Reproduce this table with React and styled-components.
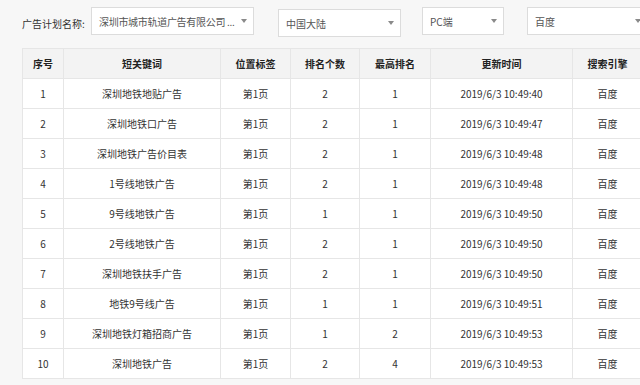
import React from "react";
import styled, { createGlobalStyle } from "styled-components";

const Global = createGlobalStyle`
  html, body { margin: 0; padding: 0; overflow: hidden; background: #f7f7f7; }
  body { font-family: "Noto Sans CJK SC", "Noto Sans", sans-serif; color: #333; }
`;

const Page = styled.div`
  width: 640px;
  height: 385px;
  overflow: hidden;
  padding: 7px 0 0 22px;
  box-sizing: border-box;
`;

const FilterBar = styled.div`
  display: flex;
  align-items: flex-start;
  width: 640px;
  height: 41px;
`;

const Label = styled.div`
  font-size: 10px;
  line-height: 14px;
  margin-top: 10px;
  width: 69px;
  flex: none;
  color: #333;
  white-space: nowrap;
`;

const Select = styled.div`
  flex: none;
  box-sizing: border-box;
  width: ${(p) => p.$w}px;
  height: 28px;
  margin-left: ${(p) => p.$gap || 0}px;
  margin-top: ${(p) => p.$top || 0}px;
  background: #fff;
  border: 1px solid #dcdcdc;
  display: flex;
  align-items: center;
  padding: 0 6px 0 7px;
  font-size: 10px;
  color: #555;
`;

const SelectText = styled.span`
  flex: 1;
  white-space: nowrap;
  line-height: 14px;
  margin-top: 1px;
  letter-spacing: ${(p) => p.$tight ? "-0.3px" : "0"};
`;

const Caret = styled.span`
  flex: none;
  width: 0;
  height: 0;
  border-left: 3.5px solid transparent;
  border-right: 3.5px solid transparent;
  border-top: 4px solid #8a8a8a;
  margin-left: 1px;
`;

const Table = styled.table`
  border-collapse: collapse;
  table-layout: fixed;
  width: 620px;
  background: #fff;
  font-size: 10px;
`;

const HeadCell = styled.th`
  height: 29px;
  padding: 0;
  background: #f3f3f3;
  border: 1px solid #e6e6e6;
  font-weight: bold;
  color: #222;
  text-align: center;
  line-height: 14px;
`;

const Cell = styled.td`
  height: 29px;
  padding: 0;
  border: 1px solid #e6e6e6;
  text-align: center;
  color: #333;
  line-height: 14px;
  white-space: nowrap;
`;

const cols = [41, 157, 70, 69, 71, 142, 70];
const headers = ["序号", "短关键词", "位置标签", "排名个数", "最高排名", "更新时间", "搜索引擎"];

const rows = [
  [1, "深圳地铁地贴广告", "第1页", 2, 1, "2019/6/3 10:49:40", "百度"],
  [2, "深圳地铁口广告", "第1页", 2, 1, "2019/6/3 10:49:47", "百度"],
  [3, "深圳地铁广告价目表", "第1页", 2, 1, "2019/6/3 10:49:48", "百度"],
  [4, "1号线地铁广告", "第1页", 2, 1, "2019/6/3 10:49:48", "百度"],
  [5, "9号线地铁广告", "第1页", 1, 1, "2019/6/3 10:49:50", "百度"],
  [6, "2号线地铁广告", "第1页", 2, 1, "2019/6/3 10:49:50", "百度"],
  [7, "深圳地铁扶手广告", "第1页", 2, 1, "2019/6/3 10:49:50", "百度"],
  [8, "地铁9号线广告", "第1页", 1, 1, "2019/6/3 10:49:51", "百度"],
  [9, "深圳地铁灯箱招商广告", "第1页", 1, 2, "2019/6/3 10:49:53", "百度"],
  [10, "深圳地铁广告", "第1页", 2, 4, "2019/6/3 10:49:53", "百度"],
];

export default function App() {
  return (
    <>
      <Global />
      <Page>
        <FilterBar>
          <Label>广告计划名称:</Label>
          <Select $w={163}>
            <SelectText $tight>深圳市城市轨道广告有限公司 ...</SelectText>
            <Caret />
          </Select>
          <Select $w={123} $gap={24} $top={2}>
            <SelectText>中国大陆</SelectText>
            <Caret />
          </Select>
          <Select $w={82} $gap={21}>
            <SelectText>PC端</SelectText>
            <Caret />
          </Select>
          <Select $w={121} $gap={23}>
            <SelectText>百度</SelectText>
            <Caret />
          </Select>
        </FilterBar>
        <Table>
          <colgroup>
            {cols.map((w, i) => (
              <col key={i} style={{ width: w }} />
            ))}
          </colgroup>
          <thead>
            <tr>
              {headers.map((h) => (
                <HeadCell key={h}>{h}</HeadCell>
              ))}
            </tr>
          </thead>
          <tbody>
            {rows.map((r) => (
              <tr key={r[0]}>
                {r.map((c, i) => (
                  <Cell key={i}>{c}</Cell>
                ))}
              </tr>
            ))}
          </tbody>
        </Table>
      </Page>
    </>
  );
}
